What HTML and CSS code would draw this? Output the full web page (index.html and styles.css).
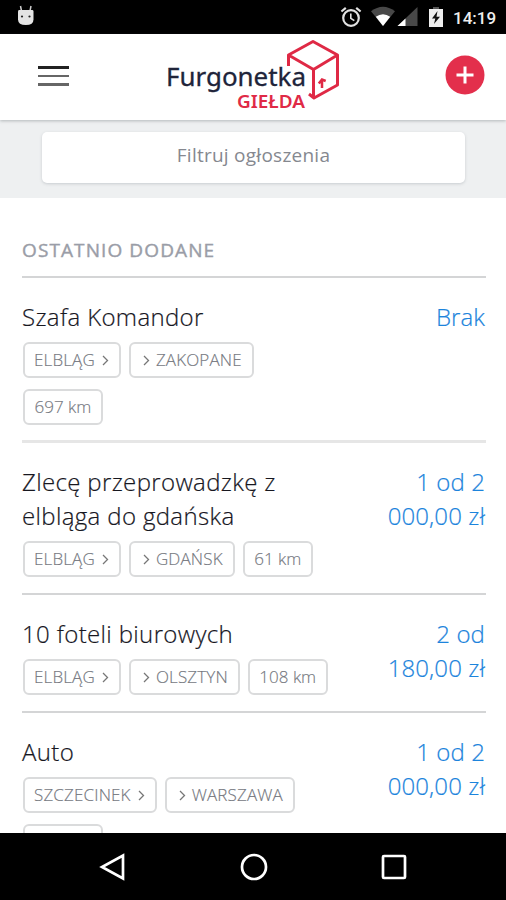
FILE: index.html
```html
<!DOCTYPE html>
<html lang="pl">
<head>
<meta charset="utf-8">
<title>Furgonetka Giełda</title>
<link rel="stylesheet" href="styles.css">
</head>
<body>
<div class="screen">
  <div class="status">
    <svg class="droid" width="20" height="22" viewBox="0 0 20 22"><path d="M4.500 1 5.500 6M15 1 14 6" stroke="#ccc" stroke-width="1.500"/><path d="M3 5h13.500q1 0 1 1.500v8q0 5.500-7.700 5.500T2 14.500v-8Q2 5 3 5z" fill="#e4e4e4"/><circle cx="6" cy="11.500" r="1.100" fill="#222"/><circle cx="13.500" cy="11.500" r="1.100" fill="#222"/></svg>
    <svg class="alarm" width="22" height="22" viewBox="0 0 22 22" fill="none" stroke="#e2e2e2"><circle cx="11" cy="12" r="7.800" stroke-width="2.200"/><path d="M10.800 7.500v4.800l3.500 2.400" stroke-width="1.600"/><path d="M1.400 5.500 5.800 1.900M20.600 5.500 16.200 1.900" stroke-width="2.200"/></svg>
    <svg class="signals" width="50" height="22" viewBox="0 0 50 22"><path d="M1 5.200Q13 -3.800 25 5.200L13 20z" fill="#484848"/><path d="M5.800 10.800Q13 5.800 20.200 10.800L13 20z" fill="#fff"/><path d="M47.500 1v19h-20z" fill="#484848"/><path d="M35.500 12.500V20h-8z" fill="#fff"/></svg>
    <svg class="battery" width="16" height="20" viewBox="0 0 16 20"><path d="M1 2h14v18H1z" fill="#eee"/><path d="M5 0h6v2H5z" fill="#555"/><path d="M9.500 4 4 11.500h3.300L6 17l6-7.300H8.500z" fill="#111"/></svg>
    <span class="clock">14:19</span>
  </div>
  <header class="header">
    <div class="burger"><i></i><i></i><i></i></div>
    <svg class="logo" width="176" height="80" viewBox="0 0 176 80">
      <text class="brand" x="0" y="48" textLength="140" lengthAdjust="spacingAndGlyphs">Furgonetka</text>
      <text class="sub" x="71" y="69.500" textLength="68" lengthAdjust="spacingAndGlyphs">GIEŁDA</text>
      <path d="M122.500 28V17L147 3.500 171.500 17V47L148 60l-5-4M122.500 17 147.500 31.500 171.500 17M147.500 31.500V60" fill="none" stroke="#df2945" stroke-width="3" stroke-linejoin="round"/>
      <path d="M156 50v-8M152.800 45.500l3.200-4 3.700 1.500" fill="none" stroke="#df2945" stroke-width="2.500"/>
    </svg>
    <div class="add"><svg width="40" height="40" viewBox="0 0 40 40"><circle cx="20" cy="20" r="19.500" fill="#e32f4c"/><path d="M20 11.500v17M11.500 20h17" stroke="#fff" stroke-width="3"/></svg></div>
  </header>
  <div class="filter"><div class="filter-button">Filtruj ogłoszenia</div></div>
  <main class="list">
    <h2 class="heading"><span>OSTATNIO DODANE</span></h2>
    <section class="item first">
      <div class="info"><div class="title">Szafa Komandor</div>
        <div class="tags"><span class="tag">ELBLĄG<svg class="chev after" viewBox="0 0 7 11"><path d="m1 1 4.500 4.500L1 10"/></svg></span><span class="tag to"><svg class="chev before" viewBox="0 0 7 11"><path d="m1 1 4.500 4.500L1 10"/></svg>ZAKOPANE</span><span class="tag km">697 km</span></div></div>
      <div class="price">Brak</div>
    </section>
    <section class="item">
      <div class="info"><div class="title">Zlecę przeprowadzkę z<br>elbląga do gdańska</div>
        <div class="tags"><span class="tag">ELBLĄG<svg class="chev after" viewBox="0 0 7 11"><path d="m1 1 4.500 4.500L1 10"/></svg></span><span class="tag to"><svg class="chev before" viewBox="0 0 7 11"><path d="m1 1 4.500 4.500L1 10"/></svg>GDAŃSK</span><span class="tag km">61 km</span></div></div>
      <div class="price">1 od 2<br>000,00 zł</div>
    </section>
    <section class="item">
      <div class="info"><div class="title">10 foteli biurowych</div>
        <div class="tags"><span class="tag">ELBLĄG<svg class="chev after" viewBox="0 0 7 11"><path d="m1 1 4.500 4.500L1 10"/></svg></span><span class="tag to"><svg class="chev before" viewBox="0 0 7 11"><path d="m1 1 4.500 4.500L1 10"/></svg>OLSZTYN</span><span class="tag km">108 km</span></div></div>
      <div class="price">2 od<br>180,00 zł</div>
    </section>
    <section class="item">
      <div class="info"><div class="title">Auto</div>
        <div class="tags"><span class="tag">SZCZECINEK<svg class="chev after" viewBox="0 0 7 11"><path d="m1 1 4.500 4.500L1 10"/></svg></span><span class="tag to"><svg class="chev before" viewBox="0 0 7 11"><path d="m1 1 4.500 4.500L1 10"/></svg>WARSZAWA</span><span class="tag blank"></span></div></div>
      <div class="price">1 od 2<br>000,00 zł</div>
    </section>
  </main>
  <nav class="nav">
    <svg width="28" height="28" viewBox="0 0 28 28"><path d="M24 2.500v23L3 14z"/></svg>
    <svg width="28" height="28" viewBox="0 0 28 28"><circle cx="14" cy="14" r="12"/></svg>
    <svg width="28" height="28" viewBox="0 0 28 28"><rect x="3" y="3" width="22" height="22" rx="1"/></svg>
  </nav>
</div>
</body>
</html>
```

FILE: styles.css
```css
* { box-sizing: border-box; }
body { margin: 0; background: #fff; font-family: "Open Sans", sans-serif; }
.screen { width: 506px; height: 900px; display: flex; flex-direction: column; overflow: hidden; }
.status { flex: none; height: 34px; background: #000; display: flex; align-items: center; padding: 0 10px 0 16px; color: #eee; }
.droid { margin-top: -2px; }
.alarm { margin-left: auto; }
.signals { margin-left: 8px; }
.battery { margin-left: 8px; margin-right: 1px; }
.clock { width: 43px; margin-left: 8px; font: 500 17px/34px Roboto, sans-serif; white-space: nowrap; padding-top: 1px; }
.header { flex: none; height: 86px; display: flex; background: #fff; position: relative; box-shadow: 0 1px 3px rgba(70, 80, 85, .35); }
.burger { width: 31px; margin: 32px 0 0 38px; display: flex; flex-direction: column; gap: 6px; height: 22px; }
.burger i { height: 2.500px; background: #666; }
.burger i:first-child { background: #222; }
.logo { margin: 4px 0 0 97px; }
.brand { font: 400 26px "Noto Sans", sans-serif; fill: #20243a; stroke: #20243a; stroke-width: .3px; }
.sub { font: 600 17px "Noto Sans", sans-serif; fill: #e02a46; }
.add { margin: 21px 0 0 103px; }
.filter { flex: none; height: 78px; background: #eef0f1; padding: 12px 41px 0 42px; }
.filter-button { height: 51px; background: #fff; border-radius: 5px; box-shadow: 0 1px 3px rgba(90, 100, 110, .25); text-align: center; font-size: 19px; line-height: 47px; letter-spacing: .25px; color: #85888f; }
.list { flex: 1; min-height: 0; overflow: hidden; padding: 0 20px 0 22px; }
.heading { margin: 0; height: 80px; border-bottom: 2px solid #d4d5d6; font-size: 19px; font-weight: 400; line-height: 104px; letter-spacing: 1.100px; color: #9a9da7; -webkit-text-stroke: .4px #9a9da7; }
.item { display: flex; justify-content: space-between; padding: 22px 0 16px; border-bottom: 2px solid #d4d5d6; }
.item.first { border-bottom: 3px solid #e6e6e6; padding-bottom: 15.500px; }
.info { width: 310px; }
.title, .price { font-size: 24px; font-weight: 300; line-height: 34px; color: #17171f; letter-spacing: .35px; white-space: nowrap; -webkit-text-stroke: .2px currentColor; }
.price { text-align: right; color: #1c84dc; letter-spacing: .1px; margin: -.5px 1px 0 0; }
.tags { display: flex; flex-wrap: wrap; gap: 10.500px 8px; margin: 8px 0 0 1px; }
.first .tags { width: 250px; }
.tag { height: 36px; border: 2px solid #dadbdc; border-radius: 6px; padding: 0 10px 0 9px; display: flex; align-items: center; font-size: 17px; font-weight: 300; line-height: 32px; letter-spacing: .15px; color: #74777e; white-space: nowrap; -webkit-text-stroke: .15px currentColor; }
.km { letter-spacing: 0; padding: 0 9.500px; }
.blank { width: 80px; }
.chev { width: 7px; height: 11px; fill: none; stroke: #777; stroke-width: 1.300; }
.after { margin-left: 7px; }
.before { margin: 0 6px 0 3px; }
.nav { flex: none; height: 67px; background: #000; display: flex; justify-content: space-between; align-items: center; padding: 0 98px 0 99px; }
.nav svg { fill: none; stroke: #fff; stroke-width: 2.700; }
```
